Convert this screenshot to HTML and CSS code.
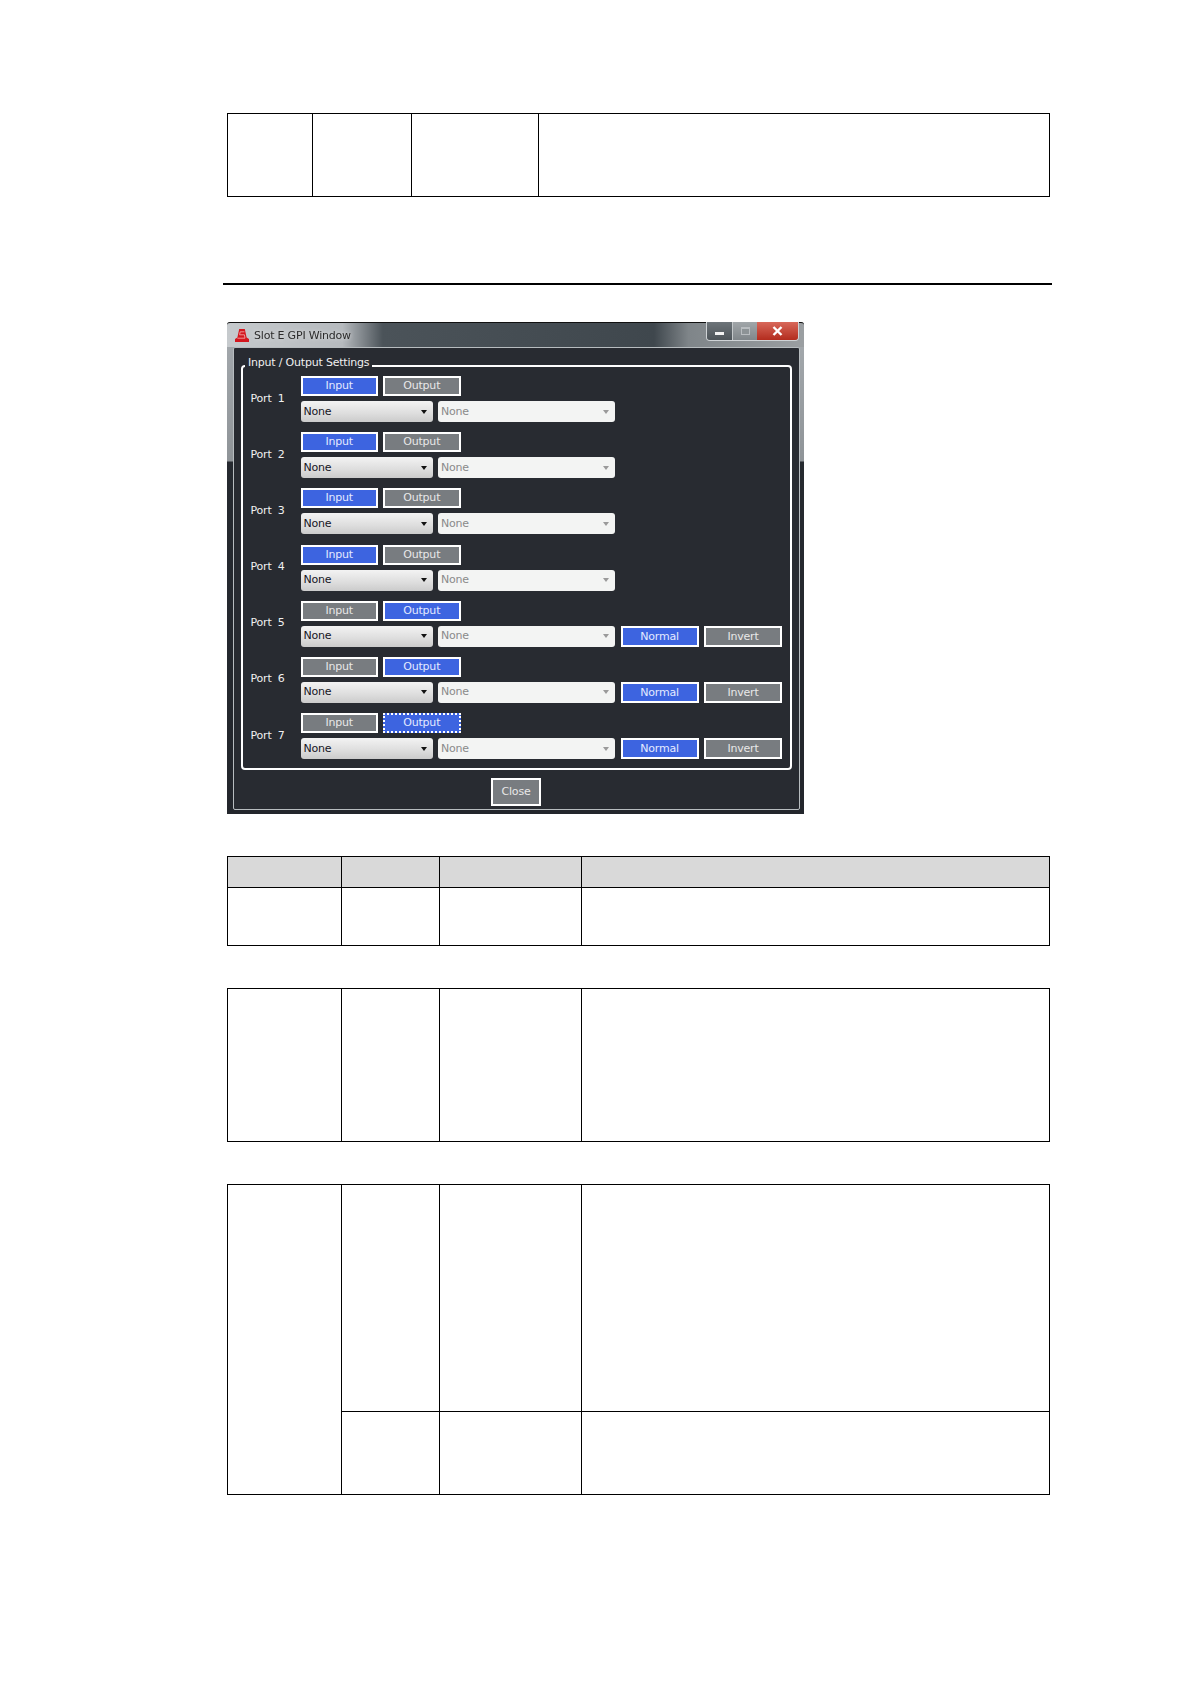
FILE: index.html
```html
<!DOCTYPE html>
<html lang="en">
<head>
    <meta charset="UTF-8">
    <meta name="viewport" content="width=device-width, initial-scale=1.0">
    <title>Slot E GPI Window</title>
    <link rel="stylesheet" href="styles.css">
</head>
<body>
    <div class="page">
        <table class="grid gridFirst">
            <tr class="h83"><td></td><td></td><td></td><td></td></tr>
        </table>

        <div class="rule"></div>

        <div class="window">
            <div class="titleBar">
                <div class="titleLeft">
                    <svg class="logo" width="14" height="13" viewBox="0 0 14 13">
                        <path d="M4.2 0H9.8L11.6 8.5L14 10V13H0V10L2.4 8.5Z" fill="#d4161e"/>
                        <path d="M9.4 2.8H5.2L4.6 5.8H9.4L10 9.2H2.4" fill="none" stroke="#f0a0a0" stroke-width=".9"/>
                    </svg>
                    <span class="titleText">Slot E GPI Window</span>
                </div>
                <div class="winBtns">
                    <div class="winBtn minBtn"><span class="minBar"></span></div>
                    <div class="winBtn maxBtn"><span class="maxBox"></span></div>
                    <div class="winBtn closeBtn">
                        <svg width="11" height="10" viewBox="0 0 11 10">
                            <path d="M1.5 1L9.5 9M9.5 1L1.5 9" stroke="#fff" stroke-width="2.4" fill="none"/>
                        </svg>
                    </div>
                </div>
            </div>
            <div class="client">
                <fieldset class="group">
                    <legend>Input / Output Settings</legend>
                    <div class="ports">
                        <div class="port">
                            <div class="portName">Port 1</div>
                            <div class="portRows">
                                <div class="portRow">
                                    <div class="btn on">Input</div>
                                    <div class="btn">Output</div>
                                </div>
                                <div class="portRow">
                                    <div class="combo"><span>None</span><i></i></div>
                                    <div class="combo off"><span>None</span><i></i></div>
                                </div>
                            </div>
                        </div>
                        <div class="port">
                            <div class="portName">Port 2</div>
                            <div class="portRows">
                                <div class="portRow">
                                    <div class="btn on">Input</div>
                                    <div class="btn">Output</div>
                                </div>
                                <div class="portRow">
                                    <div class="combo"><span>None</span><i></i></div>
                                    <div class="combo off"><span>None</span><i></i></div>
                                </div>
                            </div>
                        </div>
                        <div class="port">
                            <div class="portName">Port 3</div>
                            <div class="portRows">
                                <div class="portRow">
                                    <div class="btn on">Input</div>
                                    <div class="btn">Output</div>
                                </div>
                                <div class="portRow">
                                    <div class="combo"><span>None</span><i></i></div>
                                    <div class="combo off"><span>None</span><i></i></div>
                                </div>
                            </div>
                        </div>
                        <div class="port">
                            <div class="portName">Port 4</div>
                            <div class="portRows">
                                <div class="portRow">
                                    <div class="btn on">Input</div>
                                    <div class="btn">Output</div>
                                </div>
                                <div class="portRow">
                                    <div class="combo"><span>None</span><i></i></div>
                                    <div class="combo off"><span>None</span><i></i></div>
                                </div>
                            </div>
                        </div>
                        <div class="port">
                            <div class="portName">Port 5</div>
                            <div class="portRows">
                                <div class="portRow">
                                    <div class="btn">Input</div>
                                    <div class="btn on">Output</div>
                                </div>
                                <div class="portRow">
                                    <div class="combo"><span>None</span><i></i></div>
                                    <div class="combo off"><span>None</span><i></i></div>
                                    <div class="btn tall on">Normal</div>
                                    <div class="btn tall">Invert</div>
                                </div>
                            </div>
                        </div>
                        <div class="port">
                            <div class="portName">Port 6</div>
                            <div class="portRows">
                                <div class="portRow">
                                    <div class="btn">Input</div>
                                    <div class="btn on">Output</div>
                                </div>
                                <div class="portRow">
                                    <div class="combo"><span>None</span><i></i></div>
                                    <div class="combo off"><span>None</span><i></i></div>
                                    <div class="btn tall on">Normal</div>
                                    <div class="btn tall">Invert</div>
                                </div>
                            </div>
                        </div>
                        <div class="port">
                            <div class="portName">Port 7</div>
                            <div class="portRows">
                                <div class="portRow">
                                    <div class="btn">Input</div>
                                    <div class="btn on focus">Output</div>
                                </div>
                                <div class="portRow">
                                    <div class="combo"><span>None</span><i></i></div>
                                    <div class="combo off"><span>None</span><i></i></div>
                                    <div class="btn tall on">Normal</div>
                                    <div class="btn tall">Invert</div>
                                </div>
                            </div>
                        </div>
                    </div>
                </fieldset>
                <div class="closeRow">
                    <div class="btn closeWin">Close</div>
                </div>
            </div>
        </div>

        <table class="grid gridHead">
            <tr class="h31 head"><td></td><td></td><td></td><td></td></tr>
            <tr class="h58"><td></td><td></td><td></td><td></td></tr>
        </table>

        <table class="grid gridMid">
            <tr class="h153"><td></td><td></td><td></td><td></td></tr>
        </table>

        <table class="grid gridLast">
            <tr class="h227"><td rowspan="2"></td><td></td><td></td><td></td></tr>
            <tr class="h83"><td></td><td></td><td></td></tr>
        </table>
    </div>
</body>
</html>
```
FILE: styles.css
```css
*{
    padding: 0px;
    margin: 0px;
    box-sizing: border-box;
}
body{
    background-color: #fff;
    font-family: "DejaVu Sans", "Liberation Sans", sans-serif;
}
.page{
    width: 823px;
    margin-left: 227px;
    padding-top: 113px;
    padding-bottom: 100px;
}

/* tables */
.grid{
    width: 823px;
    table-layout: fixed;
    border-collapse: collapse;
}
.grid td{
    border: 1px solid #000;
}
.gridFirst td:nth-child(1){ width: 85px; }
.gridFirst td:nth-child(2){ width: 99px; }
.gridFirst td:nth-child(3){ width: 127px; }
.gridHead tr:first-child td:nth-child(1),
.gridMid td:nth-child(1),
.gridLast tr:first-child td:nth-child(1){ width: 114px; }
.gridHead tr:first-child td:nth-child(2),
.gridMid td:nth-child(2),
.gridLast tr:first-child td:nth-child(2){ width: 98px; }
.gridHead tr:first-child td:nth-child(3),
.gridMid td:nth-child(3),
.gridLast tr:first-child td:nth-child(3){ width: 142px; }
.head td{ background-color: #d9d9d9; }
.h31{ height: 31px; }
.h58{ height: 58px; }
.h83{ height: 83px; }
.h153{ height: 153px; }
.h227{ height: 227px; }
.gridHead{ margin-top: 42px; }
.gridMid{ margin-top: 42px; }
.gridLast{ margin-top: 42px; }

.rule{
    width: 829px;
    height: 2px;
    margin: 86px 0px 0px -4px;
    background-color: #000;
}

/* window */
.window{
    width: 577px;
    height: 492px;
    margin: 37px 0px 0px 0px;
    padding: 0px 4.5px 4px 5.5px;
    border-radius: 3px 3px 0px 0px;
    background: linear-gradient(to bottom, #a6abaf 0px, #8f9498 139px, #262a30 140px, #23262c 100%);
    filter: blur(.35px);
    display: flex;
    flex-direction: column;
}
.titleBar{
    height: 25px;
    margin: 0px -4.5px 0px -5.5px;
    border-top: 1px solid #111;
    border-radius: 3px 3px 0px 0px;
    background: linear-gradient(to right, #c6cacd 0%, #b6babe 20%, #4b5359 27%, #3f474d 74%, #7f8589 80%, #9b9fa2 100%);
    display: flex;
    justify-content: space-between;
    align-items: flex-start;
}
.titleLeft{
    display: flex;
    align-items: center;
    gap: 5px;
    padding: 6px 0px 0px 8px;
}
.titleText{
    font-size: 11px;
    letter-spacing: -.2px;
    color: #2b2b2b;
    text-shadow: 0 0 4px #e4e4e4;
}
.winBtns{
    display: flex;
    height: 19px;
    margin-right: 5px;
    margin-top: -1px;
    border: 1px solid #cfd3d6;
    border-top: 0px;
    border-radius: 0px 0px 4px 4px;
    overflow: hidden;
}
.winBtn{
    display: flex;
    align-items: center;
    justify-content: center;
}
.minBtn{
    width: 26px;
    background: linear-gradient(to bottom, #6d7479, #4d5459);
    border-right: 1px solid #c4c8ca;
}
.minBar{
    width: 9px;
    height: 3px;
    margin-top: 4px;
    background-color: #f2f2f2;
}
.maxBtn{
    width: 24px;
    background: linear-gradient(to bottom, #a1a6a9, #80868a);
}
.maxBox{
    width: 9px;
    height: 8px;
    border: 1px solid #b9bdc0;
    border-top-width: 2px;
    background-color: #8d9396;
}
.closeBtn{
    width: 41px;
    background: linear-gradient(to bottom, #d8685a, #b32c1e);
}

.client{
    flex: 1;
    padding: 0px 7px;
    border: 1px solid #b7bcbf;
    border-radius: 2px;
    background-color: #282b31;
}
.group{
    height: 414px;
    margin-top: 8px;
    border: 2px solid #fff;
    border-radius: 4px;
    padding: 0px 8px 0px 8px;
}
.group legend{
    margin-left: -5.5px;
    padding: 0px 3px 6px 3px;
    font-size: 11px;
    line-height: 14px;
    letter-spacing: -.2px;
    color: #f0f0f0;
}
.ports{
    display: flex;
    flex-direction: column;
    gap: 10.2px;
}
.port{
    display: flex;
    align-items: center;
    height: 46px;
}
.portName{
    width: 50px;
    padding-bottom: 2px;
    font-size: 11px;
    letter-spacing: -.2px;
    word-spacing: 3px;
    color: #f0f0f0;
}
.portRows{
    display: flex;
    flex-direction: column;
    gap: 5px;
}
.portRow{
    display: flex;
    gap: 5.5px;
}
.portRow:first-child{
    gap: 5px;
}
.portRow:first-child .btn{
    width: 77.5px;
}
.btn{
    width: 78px;
    height: 20px;
    border: 2px solid #fff;
    background-color: #787c80;
    color: #e8e8e8;
    font-size: 11px;
    letter-spacing: -.2px;
    line-height: 16px;
    text-align: center;
}
.btn.on{
    background-color: #3d64e0;
    color: #e4eaff;
}
.btn.tall{
    height: 21px;
    line-height: 17px;
}
.btn.focus{
    border-style: dotted;
}
.combo{
    width: 132px;
    height: 21px;
    padding: 0px 5px 0px 3px;
    border-radius: 3px;
    background: linear-gradient(to bottom, #f3f3f3, #dddddd 60%, #cbcbcb);
    color: #15151f;
    font-size: 11px;
    letter-spacing: -.2px;
    line-height: 20px;
    display: flex;
    align-items: center;
    justify-content: space-between;
}
.combo i{
    width: 0px;
    height: 0px;
    margin-right: 1px;
    border: 3px solid transparent;
    border-top: 4px solid #111;
    border-bottom: 0px;
}
.combo.off{
    width: 177px;
    background: #f3f4f3;
    color: #8a8a8a;
}
.combo.off i{
    border-top-color: #9a9a9a;
}
.closeRow{
    display: flex;
    justify-content: center;
    padding-top: 8px;
}
.closeWin{
    width: 50px;
    height: 28px;
    line-height: 24px;
}
```
